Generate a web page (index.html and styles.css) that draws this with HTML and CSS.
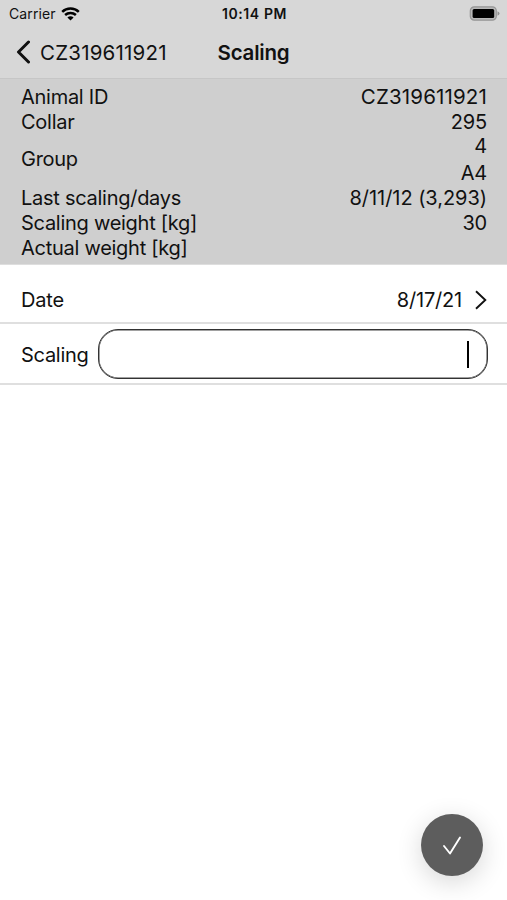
FILE: index.html
```html
<!DOCTYPE html>
<html lang="en">
	<head>
		<meta charset="utf-8" />
		<title>Scaling</title>
		<link rel="stylesheet" href="styles.css">
	</head>
	<body>
		<div id="header">
			<div class="status">
				<div class="carrier">
					<span>Carrier</span>
					<svg class="wifi" width="19" height="14" viewBox="0 0 19 14" fill="none" stroke="#000" stroke-width="2.5">
						<path d="M1.2 4.9C5.8 .5 13.2 .5 17.8 4.9" />
						<path d="M4.1 8C7.2 5.2 11.8 5.2 14.9 8" />
						<path d="M6.4 10.4C8.1 8.8 10.9 8.8 12.6 10.4L9.5 13.6Z" fill="#000" stroke="none" />
					</svg>
				</div>
				<div class="time">10:14 PM</div>
				<svg class="battery" width="31" height="15" viewBox="0 0 31 15">
					<rect x="1.3" y=".8" width="26" height="13.4" rx="4" fill="#b8b8b8" stroke="#969696" stroke-width="1.2" />
					<rect x="3.6" y="3" width="21.6" height="9" rx="1.5" fill="#000" />
					<path d="M28.5 5.2Q30.5 6 30.5 7.5T28.5 9.8Z" fill="#909090" />
				</svg>
			</div>
			<div class="nav">
				<a class="back">
					<svg width="14" height="24" viewBox="0 0 14 24" fill="none" stroke="#111" stroke-width="3" stroke-linecap="round" stroke-linejoin="round">
						<path d="M12.5 2L2.5 12L12.5 22" />
					</svg>
					<span class="code">CZ319611921</span>
				</a>
				<div class="title">Scaling</div>
			</div>
		</div>
		<div id="info">
			<div class="row"><span class="label">Animal ID</span><span class="code">CZ319611921</span></div>
			<div class="row"><span class="label">Collar</span><span>295</span></div>
			<div class="row group"><span class="label">Group</span><span>4<br>A4</span></div>
			<div class="row"><span class="label">Last scaling/days</span><span class="last">8/11/12 (3,293)</span></div>
			<div class="row"><span class="label">Scaling weight [kg]</span><span>30</span></div>
			<div class="row"><span class="label">Actual weight [kg]</span><span></span></div>
		</div>
		<div id="form">
			<div class="date">
				<span>Date</span>
				<span class="value">8/17/21</span>
				<svg width="12" height="20" viewBox="0 0 12 20" fill="none" stroke="#111" stroke-width="1.9">
					<path d="M1 1.3L10.3 10L1 18.7" />
				</svg>
			</div>
			<div class="scaling">
				<span class="label">Scaling</span>
				<div class="input"><i class="caret"></i></div>
			</div>
		</div>
		<div id="ok">
			<svg width="20" height="20" viewBox="0 0 20 20" fill="none" stroke="#fff" stroke-width="1.9" stroke-linecap="round" stroke-linejoin="round">
				<path d="M2 11L8 18.5L18 2.5" />
			</svg>
		</div>
	</body>
</html>
```
FILE: styles.css
```css
html,body{
	margin: 0;
	padding: 0;
}
body{
	height: 900px;
	overflow: hidden;
	background: #fff;
	color: #111;
	font-family: Inter, "Liberation Sans", sans-serif;
	font-size: 20px;
	letter-spacing: -0.2px;
}
svg{
	display: block;
	flex: none;
}
#header{
	box-sizing: border-box;
	height: 79px;
	background: #d7d7d7;
	border-bottom: 1px solid #c6c6c6;
}
.status{
	display: grid;
	grid-template-columns: 1fr auto 1fr;
	align-items: center;
	height: 27px;
	padding: 0 7px 0 9px;
	font-size: 14px;
	letter-spacing: 0.1px;
}
.carrier{
	display: flex;
	align-items: center;
	gap: 5px;
}
.time{
	font-size: 14px;
	font-weight: 600;
	letter-spacing: 0.6px;
}
.battery{
	justify-self: end;
}
.nav{
	display: grid;
	grid-template-columns: 1fr auto 1fr;
	align-items: center;
	height: 50px;
	padding: 0 16px;
}
.back{
	display: flex;
	align-items: center;
	gap: 10px;
}
.code{
	font-size: 20.5px;
	letter-spacing: 0.15px;
}
.back .code{
	letter-spacing: 0.2px;
}
.last{
	letter-spacing: -0.05px;
}
.label{
	letter-spacing: -0.27px;
}
.title{
	font-size: 20.5px;
	font-weight: 600;
	letter-spacing: -0.2px;
}
#info{
	box-sizing: border-box;
	height: 186px;
	padding: 5px 20px 0 21px;
	background: #cfcfcf;
	border-bottom: 1px solid #dedede;
}
.row{
	display: flex;
	justify-content: space-between;
	align-items: center;
	height: 25px;
	text-align: right;
}
.group{
	height: 51.4px;
	line-height: 27px;
}
.date,.scaling{
	box-sizing: border-box;
	display: flex;
	align-items: center;
	border-bottom: 2px solid #dfdfdf;
}
.date{
	height: 59px;
	padding: 12px 20px 0 21px;
}
.value{
	margin-left: auto;
	margin-right: 13px;
}
.scaling{
	height: 61px;
	padding: 1px 19px 0 21px;
}
.scaling .label{
	padding-top: 1px;
}
.input{
	box-sizing: border-box;
	display: flex;
	flex: 1;
	align-items: center;
	justify-content: flex-end;
	height: 50px;
	margin-left: 9px;
	padding-right: 18px;
	border: 1px solid #333;
	border-radius: 20px;
	box-shadow: inset 0 0 0 0.5px #444;
}
.caret{
	width: 2.5px;
	height: 27px;
	background: #000;
}
#ok{
	position: absolute;
	right: 24px;
	bottom: 24px;
	display: flex;
	align-items: center;
	justify-content: center;
	width: 62px;
	height: 62px;
	border-radius: 50%;
	background: #5d5d5d;
	box-shadow: 0 6px 26px rgba(0,0,0,.16);
}
```
